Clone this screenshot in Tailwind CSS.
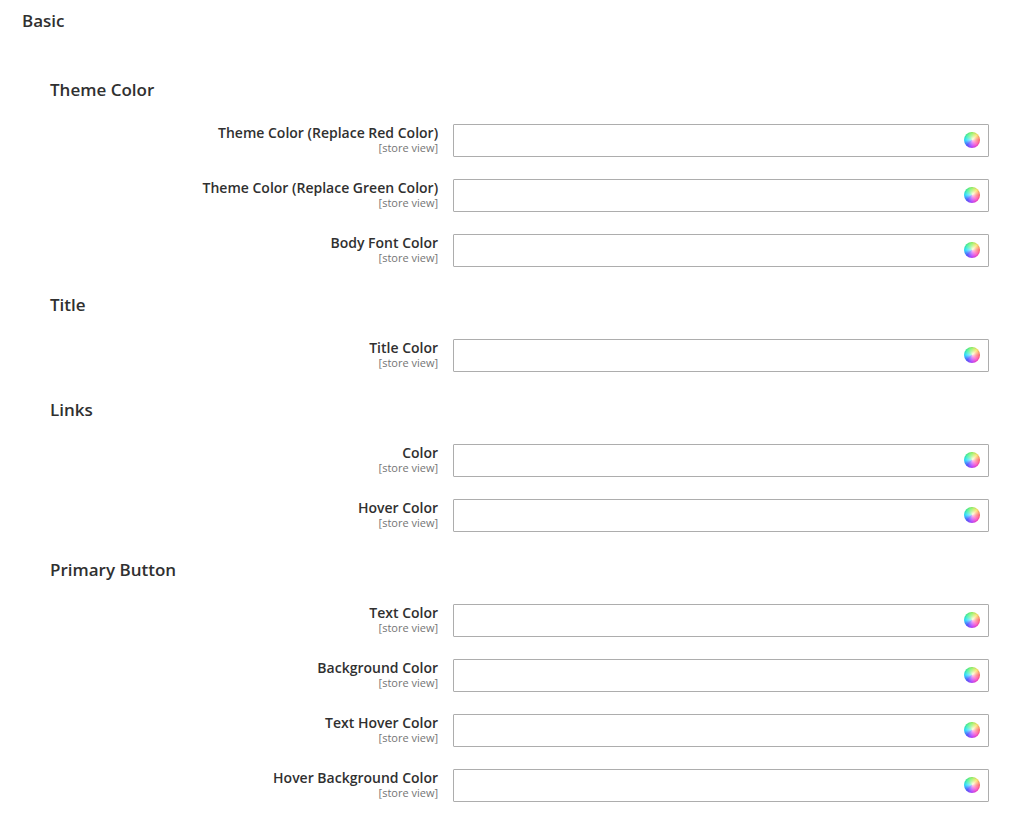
<!DOCTYPE html>
<html lang="en">
<head>
  <meta charset="UTF-8" />
  <meta name="viewport" content="width=device-width, initial-scale=1" />
  <title>Basic</title>
  <script src="https://cdn.jsdelivr.net/npm/@tailwindcss/browser@4"></script>
</head>
<body class="bg-white text-[#303030] font-['Open_Sans',sans-serif]">
  <form class="pl-[22px] pr-[23px] pt-[9px] pb-5">
    <h2 class="text-[17px] leading-6 font-semibold">Basic</h2>

    <div class="pl-7 pt-[45px] space-y-[26px]">
      <!-- Theme Color -->
      <section>
        <h3 class="text-[17px] leading-6 font-semibold mb-[22px]">Theme Color</h3>
        <div class="space-y-[22px]">
          <div class="grid grid-cols-[42fr_58fr] gap-[15px]">
            <label for="themeRed" class="text-right">
              <span class="block text-sm leading-[17px] font-semibold">Theme Color (Replace Red Color)</span>
              <span class="block text-[11px] leading-[14px] text-[#757575]">[store view]</span>
            </label>
            <div class="relative">
              <input id="themeRed" type="text" class="block w-full h-[33px] border border-[#adadad] rounded-[1px] pl-2 pr-8 text-sm" />
              <button type="button" aria-label="Pick color" class="absolute top-2 right-[9px] size-4 rounded-full bg-[radial-gradient(circle_at_56%_44%,#ffffffe0_0%,#ffffff80_25%,#ffffff20_60%),conic-gradient(#78f03c,#ffd83c_45deg,#ff4646_90deg,#ff32b4_135deg,#b432ff_180deg,#3c46ff_225deg,#14dcff_270deg,#28f08c_315deg,#78f03c)] inset-ring inset-ring-black/5"></button>
            </div>
          </div>
          <div class="grid grid-cols-[42fr_58fr] gap-[15px]">
            <label for="themeGreen" class="text-right">
              <span class="block text-sm leading-[17px] font-semibold">Theme Color (Replace Green Color)</span>
              <span class="block text-[11px] leading-[14px] text-[#757575]">[store view]</span>
            </label>
            <div class="relative">
              <input id="themeGreen" type="text" class="block w-full h-[33px] border border-[#adadad] rounded-[1px] pl-2 pr-8 text-sm" />
              <button type="button" aria-label="Pick color" class="absolute top-2 right-[9px] size-4 rounded-full bg-[radial-gradient(circle_at_56%_44%,#ffffffe0_0%,#ffffff80_25%,#ffffff20_60%),conic-gradient(#78f03c,#ffd83c_45deg,#ff4646_90deg,#ff32b4_135deg,#b432ff_180deg,#3c46ff_225deg,#14dcff_270deg,#28f08c_315deg,#78f03c)] inset-ring inset-ring-black/5"></button>
            </div>
          </div>
          <div class="grid grid-cols-[42fr_58fr] gap-[15px]">
            <label for="bodyFont" class="text-right">
              <span class="block text-sm leading-[17px] font-semibold">Body Font Color</span>
              <span class="block text-[11px] leading-[14px] text-[#757575]">[store view]</span>
            </label>
            <div class="relative">
              <input id="bodyFont" type="text" class="block w-full h-[33px] border border-[#adadad] rounded-[1px] pl-2 pr-8 text-sm" />
              <button type="button" aria-label="Pick color" class="absolute top-2 right-[9px] size-4 rounded-full bg-[radial-gradient(circle_at_56%_44%,#ffffffe0_0%,#ffffff80_25%,#ffffff20_60%),conic-gradient(#78f03c,#ffd83c_45deg,#ff4646_90deg,#ff32b4_135deg,#b432ff_180deg,#3c46ff_225deg,#14dcff_270deg,#28f08c_315deg,#78f03c)] inset-ring inset-ring-black/5"></button>
            </div>
          </div>
        </div>
      </section>

      <!-- Title -->
      <section>
        <h3 class="text-[17px] leading-6 font-semibold mb-[22px]">Title</h3>
        <div class="grid grid-cols-[42fr_58fr] gap-[15px]">
          <label for="titleColor" class="text-right">
            <span class="block text-sm leading-[17px] font-semibold">Title Color</span>
            <span class="block text-[11px] leading-[14px] text-[#757575]">[store view]</span>
          </label>
          <div class="relative">
            <input id="titleColor" type="text" class="block w-full h-[33px] border border-[#adadad] rounded-[1px] pl-2 pr-8 text-sm" />
            <button type="button" aria-label="Pick color" class="absolute top-2 right-[9px] size-4 rounded-full bg-[radial-gradient(circle_at_56%_44%,#ffffffe0_0%,#ffffff80_25%,#ffffff20_60%),conic-gradient(#78f03c,#ffd83c_45deg,#ff4646_90deg,#ff32b4_135deg,#b432ff_180deg,#3c46ff_225deg,#14dcff_270deg,#28f08c_315deg,#78f03c)] inset-ring inset-ring-black/5"></button>
          </div>
        </div>
      </section>

      <!-- Links -->
      <section>
        <h3 class="text-[17px] leading-6 font-semibold mb-[22px]">Links</h3>
        <div class="space-y-[22px]">
          <div class="grid grid-cols-[42fr_58fr] gap-[15px]">
            <label for="linkColor" class="text-right">
              <span class="block text-sm leading-[17px] font-semibold">Color</span>
              <span class="block text-[11px] leading-[14px] text-[#757575]">[store view]</span>
            </label>
            <div class="relative">
              <input id="linkColor" type="text" class="block w-full h-[33px] border border-[#adadad] rounded-[1px] pl-2 pr-8 text-sm" />
              <button type="button" aria-label="Pick color" class="absolute top-2 right-[9px] size-4 rounded-full bg-[radial-gradient(circle_at_56%_44%,#ffffffe0_0%,#ffffff80_25%,#ffffff20_60%),conic-gradient(#78f03c,#ffd83c_45deg,#ff4646_90deg,#ff32b4_135deg,#b432ff_180deg,#3c46ff_225deg,#14dcff_270deg,#28f08c_315deg,#78f03c)] inset-ring inset-ring-black/5"></button>
            </div>
          </div>
          <div class="grid grid-cols-[42fr_58fr] gap-[15px]">
            <label for="linkHover" class="text-right">
              <span class="block text-sm leading-[17px] font-semibold">Hover Color</span>
              <span class="block text-[11px] leading-[14px] text-[#757575]">[store view]</span>
            </label>
            <div class="relative">
              <input id="linkHover" type="text" class="block w-full h-[33px] border border-[#adadad] rounded-[1px] pl-2 pr-8 text-sm" />
              <button type="button" aria-label="Pick color" class="absolute top-2 right-[9px] size-4 rounded-full bg-[radial-gradient(circle_at_56%_44%,#ffffffe0_0%,#ffffff80_25%,#ffffff20_60%),conic-gradient(#78f03c,#ffd83c_45deg,#ff4646_90deg,#ff32b4_135deg,#b432ff_180deg,#3c46ff_225deg,#14dcff_270deg,#28f08c_315deg,#78f03c)] inset-ring inset-ring-black/5"></button>
            </div>
          </div>
        </div>
      </section>

      <!-- Primary Button -->
      <section>
        <h3 class="text-[17px] leading-6 font-semibold mb-[22px]">Primary Button</h3>
        <div class="space-y-[22px]">
          <div class="grid grid-cols-[42fr_58fr] gap-[15px]">
            <label for="btnText" class="text-right">
              <span class="block text-sm leading-[17px] font-semibold">Text Color</span>
              <span class="block text-[11px] leading-[14px] text-[#757575]">[store view]</span>
            </label>
            <div class="relative">
              <input id="btnText" type="text" class="block w-full h-[33px] border border-[#adadad] rounded-[1px] pl-2 pr-8 text-sm" />
              <button type="button" aria-label="Pick color" class="absolute top-2 right-[9px] size-4 rounded-full bg-[radial-gradient(circle_at_56%_44%,#ffffffe0_0%,#ffffff80_25%,#ffffff20_60%),conic-gradient(#78f03c,#ffd83c_45deg,#ff4646_90deg,#ff32b4_135deg,#b432ff_180deg,#3c46ff_225deg,#14dcff_270deg,#28f08c_315deg,#78f03c)] inset-ring inset-ring-black/5"></button>
            </div>
          </div>
          <div class="grid grid-cols-[42fr_58fr] gap-[15px]">
            <label for="btnBg" class="text-right">
              <span class="block text-sm leading-[17px] font-semibold">Background Color</span>
              <span class="block text-[11px] leading-[14px] text-[#757575]">[store view]</span>
            </label>
            <div class="relative">
              <input id="btnBg" type="text" class="block w-full h-[33px] border border-[#adadad] rounded-[1px] pl-2 pr-8 text-sm" />
              <button type="button" aria-label="Pick color" class="absolute top-2 right-[9px] size-4 rounded-full bg-[radial-gradient(circle_at_56%_44%,#ffffffe0_0%,#ffffff80_25%,#ffffff20_60%),conic-gradient(#78f03c,#ffd83c_45deg,#ff4646_90deg,#ff32b4_135deg,#b432ff_180deg,#3c46ff_225deg,#14dcff_270deg,#28f08c_315deg,#78f03c)] inset-ring inset-ring-black/5"></button>
            </div>
          </div>
          <div class="grid grid-cols-[42fr_58fr] gap-[15px]">
            <label for="btnTextHover" class="text-right">
              <span class="block text-sm leading-[17px] font-semibold">Text Hover Color</span>
              <span class="block text-[11px] leading-[14px] text-[#757575]">[store view]</span>
            </label>
            <div class="relative">
              <input id="btnTextHover" type="text" class="block w-full h-[33px] border border-[#adadad] rounded-[1px] pl-2 pr-8 text-sm" />
              <button type="button" aria-label="Pick color" class="absolute top-2 right-[9px] size-4 rounded-full bg-[radial-gradient(circle_at_56%_44%,#ffffffe0_0%,#ffffff80_25%,#ffffff20_60%),conic-gradient(#78f03c,#ffd83c_45deg,#ff4646_90deg,#ff32b4_135deg,#b432ff_180deg,#3c46ff_225deg,#14dcff_270deg,#28f08c_315deg,#78f03c)] inset-ring inset-ring-black/5"></button>
            </div>
          </div>
          <div class="grid grid-cols-[42fr_58fr] gap-[15px]">
            <label for="btnBgHover" class="text-right">
              <span class="block text-sm leading-[17px] font-semibold">Hover Background Color</span>
              <span class="block text-[11px] leading-[14px] text-[#757575]">[store view]</span>
            </label>
            <div class="relative">
              <input id="btnBgHover" type="text" class="block w-full h-[33px] border border-[#adadad] rounded-[1px] pl-2 pr-8 text-sm" />
              <button type="button" aria-label="Pick color" class="absolute top-2 right-[9px] size-4 rounded-full bg-[radial-gradient(circle_at_56%_44%,#ffffffe0_0%,#ffffff80_25%,#ffffff20_60%),conic-gradient(#78f03c,#ffd83c_45deg,#ff4646_90deg,#ff32b4_135deg,#b432ff_180deg,#3c46ff_225deg,#14dcff_270deg,#28f08c_315deg,#78f03c)] inset-ring inset-ring-black/5"></button>
            </div>
          </div>
        </div>
      </section>
    </div>
  </form>
</body>
</html>
